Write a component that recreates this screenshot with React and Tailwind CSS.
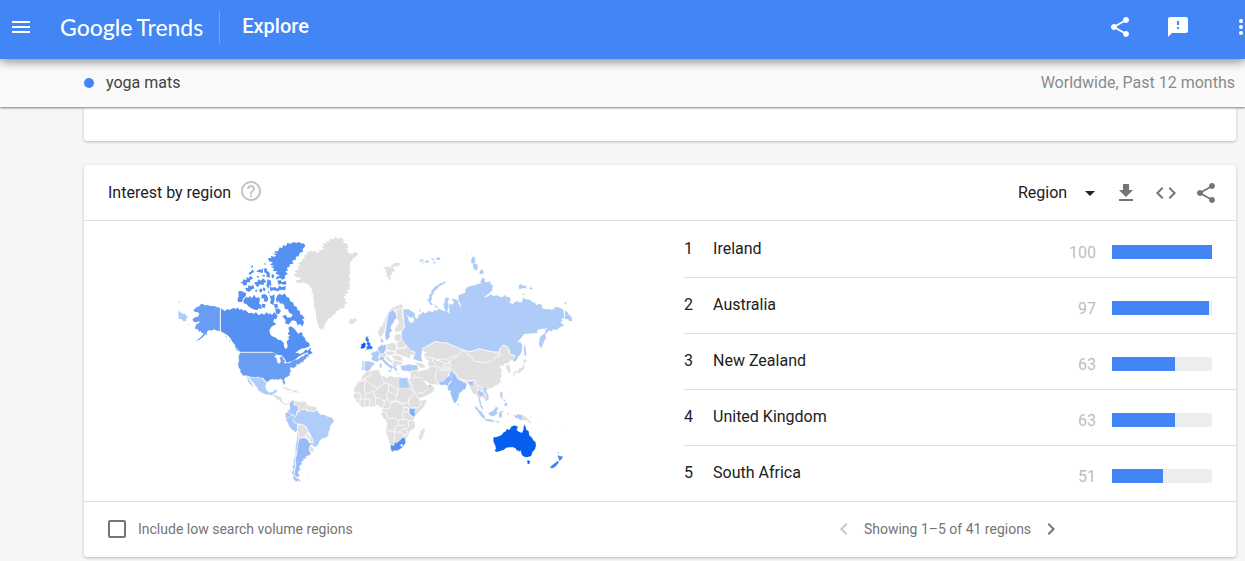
import {
  MdArrowDropDown,
  MdChevronLeft,
  MdChevronRight,
  MdCode,
  MdFeedback,
  MdHelpOutline,
  MdMenu,
  MdShare,
} from "react-icons/md";

const regions = [
  { name: "Ireland", value: 100 },
  { name: "Australia", value: 97 },
  { name: "New Zealand", value: 63 },
  { name: "United Kingdom", value: 63 },
  { name: "South Africa", value: 51 },
];

const GREY = "#e0e0e0";
const LIGHT = "#afccf9";
const SOFT = "#a6c5f9";

// every part of the map has its own origin, three units make one map unit
// outline is the width of the white line round each shape
const mapParts = [
  {
    x: 170,
    y: 230,
    outline: 0,
    shapes: [
      // Alaska
      ["#699df3", "M150 233L141 232 133 228 122 228 112 225 104 226 98 221 92 223 88 229 80 231 74 237 70 241 75 246 84 247 88 252 84 260 76 261 72 264 67 269 72 276 80 277 88 274 88 279 80 282 76 290 75 296 84 298 86 305 92 303 95 309 101 309 96 318 88 325 76 334 88 329 98 322 104 315 110 311 112 304 118 300 124 302 132 298 141 302 150 303Z"],
      // Canada
      ["#5590f3", "M152 234L160 240 165 243 172 237 178 240 184 237 192 233 197 238 203 232 208 239 214 237 220 242 226 239 232 246 236 250 245 248 252 252 258 246 262 252 268 256 274 250 282 254 290 247 296 253 302 250 306 256 312 246 318 252 323 258 318 268 312 267 310 276 319 282 308 288 303 292 298 302 302 315 309 320 316 322 324 329 332 330 341 338 342 350 348 358 353 350 350 334 357 328 355 322 360 316 353 312 358 304 355 293 362 289 370 293 376 300 385 312 390 307 397 308 398 318 403 321 408 333 418 340 419 349 406 354 394 356 384 362 375 370 384 368 388 372 398 369 408 358 412 363 424 352 421 362 428 368 416 375 412 367 400 372 385 380 372 392 350 398 345 388 335 376 320 374 308 368 212 368 206 359 198 354 195 345 186 334 181 324 172 315 160 308 152 303Z"],
      // Arctic islands
      ["#5590f3", "M205 184L214 183 220 186 229 190 227 198 219 206 216 216 205 216 202 208 206 200ZM220 211L228 200 234 204 240 198 246 205 252 194 258 203 268 202 270 212 267 220 274 226 275 237 266 235 262 241 250 238 243 234 236 230 230 223 221 220Z"],
      ["#5590f3", "M321 197L329 191 336 196 344 190 350 200 358 204 360 213 370 218 372 228 380 230 382 239 390 244 390 252 399 257 404 267 396 266 402 276 398 289 388 281 384 287 378 274 369 271 360 275 354 263 364 262 368 254 358 248 353 238 344 236 343 226 336 220 330 221 326 213 320 218 318 208Z"],
      ["#5590f3", "M312 64L324 64 329 52 336 55 340 45 348 48 352 39 363 41 370 36 380 39 388 36 396 41 402 40 406 49 398 57 399 65 389 69 386 79 378 80 377 89 366 92 371 101 360 102 358 111 350 113 354 122 346 124 353 132 344 137 346 145 336 149 330 143 320 149 318 142 329 137 316 130 322 124 308 123 313 116 303 110 314 108 300 104 309 97 297 94 294 84 304 84 303 77 313 81 318 76 308 70 320 71ZM322 152L332 150 336 157 347 152 350 163 340 164 333 161 326 164ZM306 132L313 136 310 146 304 141Z"],
      ["#5590f3", "M299 166L305 173 315 171 322 176 330 165 333 172 347 168 346 181 332 179 322 184 310 180 301 184ZM210 158L218 155 220 148 229 150 230 141 236 144 243 137 249 146 240 150 241 157 230 157 231 164 221 167 219 161ZM235 130L244 124 247 118 253 126 246 129 241 135ZM225 173L234 174 235 166 245 169 249 163 253 175 244 179 238 186 230 183ZM252 157L262 156 266 148 272 152 280 145 290 156 282 158 280 166 270 163 263 172 257 166Z"],
      ["#5590f3", "M259 125L268 118 275 119 280 114 278 130 269 127ZM282 116L289 114 292 123 299 128 300 143 289 140 290 131 283 127ZM293 148L303 152 304 167 297 165 296 177 289 167ZM274 195L283 192 290 196 295 205 291 216 281 214 283 205 275 206ZM298 195L305 198 313 193 314 208 310 226 300 219 303 209ZM312 223L322 221 324 232 315 236ZM316 237L325 235 333 243 326 253 318 251ZM337 259L347 254 351 262 360 265 363 276 355 284 345 279 347 270ZM275 221L287 223 284 235 276 231ZM267 179L274 175 278 184 270 188ZM243 109L249 106 249 112 244 113ZM281 101L287 100 286 106ZM259 139L267 138 265 145ZM275 136L285 135 283 142ZM254 182L262 178 260 187ZM280 172L287 176 284 184 278 180ZM294 182L300 188 294 190Z"],
      // Chukotka past the date line, Pacific islands
      [LIGHT, "M25 242L34 248 38 252 43 250 49 258 55 262 48 266 49 273 40 274 34 267 26 268ZM26 215L30 214 30 219 26 219ZM54 282L59 282 58 286Z"],
      ["#8fb5f6", "M104 311L110 307 112 313 106 316ZM166 317L171 321 169 325ZM177 328L182 337 178 335ZM193 347L205 356 210 366 200 361Z"],
    ],
  },
  {
    x: 230,
    y: 345,
    outline: 2,
    shapes: [
      // USA
      ["#699df3", "M30 22L130 22 140 28 134 36 140 39 143 54 149 55 152 50 149 37 157 33 160 42 166 49 162 54 178 54 190 46 205 42 215 34 220 34 226 27 232 26 238 34 230 37 228 42 221 46 222 50 212 53 206 59 199 58 200 64 190 70 183 67 180 72 184 77 179 84 180 91 172 96 166 98 162 104 166 112 165 119 162 119 158 112 157 105 150 101 146 105 138 103 132 105 128 102 118 106 112 112 106 108 98 98 91 100 85 96 75 98 62 96 50 92 38 92 36 87 30 80 31 74 25 67 24 54 27 47 25 36Z"],
      [LIGHT, "M50 93L62 97 78 98 86 97 96 100 104 110 110 112 107 124 110 136 118 142 128 141 134 134 143 134 138 144 130 146 127 153 121 149 108 149 96 144 84 136 82 128 74 120 70 113 62 106 60 100ZM48 94L56 99 60 107 65 113 67 120 74 128 65 124 60 116 54 111 52 102Z"],
      [GREY, "M128 150L132 146 140 152 152 154 156 164 160 172 168 177 176 173 178 177 170 180 164 180 156 175 149 167 142 165 136 158ZM154 126L166 125 174 130 185 134 182 138 170 135 163 130ZM187 136L196 135 205 141 200 144 188 142ZM174 140L181 140 181 144ZM208 141L214 142 210 145ZM128 202L133 203 130 208Z"],
      [GREY, "M192 170L198 167 205 170 218 170 230 170 229 176 233 181 228 192 218 192 213 199 207 198 206 186 194 180Z"],
      [GREY, "M232 180L244 184 258 186 262 194 250 198 236 198 228 190Z"],
      [SOFT, "M178 176L186 166 193 167 191 173 193 180 204 184 206 196 200 200 198 214 190 210 183 206 174 202 173 197 180 192Z"],
      ["#b0ccf9", "M206 200L218 194 228 193 231 199 238 199 250 200 262 196 268 206 276 209 284 209 291 214 303 217 312 224 311 231 304 239 300 246 300 254 296 261 295 272 288 278 281 279 272 284 268 290 266 297 257 307 244 300 250 292 248 282 240 266 234 258 230 246 218 238 202 236 192 230 188 222 198 214 202 204Z"],
      [SOFT, "M166 204L174 201 184 208 182 214 173 220 166 217Z"],
      ["#a9c7f9", "M166 220L174 219 186 210 196 214 188 224 192 232 202 238 202 256 196 262 184 252 178 246 173 234Z"],
      [GREY, "M203 240L216 238 230 248 231 256 236 260 228 268 224 276 206 278 203 262ZM230 268L238 268 240 276 248 280 249 293 238 292 240 284 226 274ZM238 304L244 305 253 312 250 320 240 320Z"],
      ["#98bbf7", "M208 280L224 278 234 284 238 294 249 295 240 302 237 310 238 319 243 325 239 331 228 334 228 341 220 342 221 348 213 350 217 357 209 363 208 369 213 374 205 379 204 384 209 392 202 397 194 391 194 377 198 362 196 344 201 324 202 300Z"],
      [SOFT, "M202 262L206 280 202 300 199 324 194 344 196 362 192 377 193 391 199 398 210 404 212 411 203 407 198 411 188 399 191 393 185 382 190 375 187 363 192 359 190 347 196 328 197 303 201 282ZM233 395L238 395 234 399Z"],
    ],
  },
  {
    x: 270,
    y: 230,
    outline: 0,
    shapes: [
      // Greenland, Iceland, Svalbard
      [GREY, "M70 134L80 130 74 123 86 118 84 110 90 104 83 99 94 96 98 88 104 84 103 76 110 73 112 63 117 68 121 61 128 65 137 63 140 69 148 66 147 58 155 61 162 57 154 48 163 48 158 39 172 40 168 33 177 34 181 27 190 28 196 21 204 26 215 23 224 32 216 37 234 42 232 49 237 54 226 56 236 60 231 66 240 70 247 73 255 65 266 73 257 79 256 85 248 84 248 92 240 95 240 106 241 114 238 120 241 130 237 138 240 148 238 157 241 165 237 172 240 179 228 182 238 188 224 193 228 197 219 202 229 208 224 213 234 219 222 224 226 231 218 236 208 235 208 241 199 243 196 251 187 257 184 263 175 266 171 274 165 281 163 289 161 300 155 295 151 300 146 291 144 283 141 277 140 268 138 260 138 250 136 240 131 230 133 216 130 206 130 194 125 182 125 174 119 170 116 163 108 162 101 157 92 160 80 158 78 151 90 149 92 143 80 142Z"],
      [GREY, "M233 270L240 272 242 266 250 268 256 264 260 271 253 279 245 283 240 279 235 280 238 275ZM340 112L347 110 350 114 354 107 360 112 366 110 363 104 370 103 375 98 389 99 389 106 381 110 372 108 368 114 375 120 372 126 364 124 367 132 360 138 363 146 358 153 354 142 348 138 352 132 344 126 350 122Z"],
    ],
  },
  {
    x: 350,
    y: 240,
    outline: 2,
    shapes: [
      // Scandinavia
      [GREY, "M84 270L90 266 88 261 97 258 98 250 104 244 105 234 111 228 114 217 122 208 129 202 136 201 139 195 146 197 150 191 158 196 161 203 152 203 146 207 138 210 126 212 116 222 110 240 106 260 104 276 96 288 90 292 85 284Z"],
      [SOFT, "M117 218L128 210 136 216 141 234 134 239 131 248 124 256 122 265 127 272 119 278 120 290 113 299 107 301 105 285 108 266 110 250 113 232Z"],
      [GREY, "M138 212L150 206 156 203 158 232 162 250 161 265 152 274 138 278 134 268 139 258 146 250 145 242 140 235 142 225Z"],
      // western Russia
      [LIGHT, "M160 206L168 208 176 207 184 213 194 219 197 228 190 234 182 233 170 226 176 233 175 241 184 249 191 244 192 237 188 232 195 230 200 236 206 231 203 226 213 222 218 213 222 219 230 218 236 212 248 216 253 210 262 211 268 205 276 210 286 214 282 204 280 193 284 187 283 177 292 171 298 176 294 187 297 200 292 213 299 223 304 212 316 222 326 228 320 216 310 210 318 204 304 198 312 186 302 178 313 176 324 181 326 190 331 198 334 204 332 190 326 168 334 162 346 158 360 300 320 320 300 313 288 308 270 308 258 304 240 314 228 320 232 328 216 326 216 336 214 350 218 366 204 362 189 357 194 344 196 336 184 332 172 320 164 310 156 300 154 284 156 272 164 262 162 240 160 220Z"],
      [LIGHT, "M240 195L237 186 231 181 237 174 237 165 243 160 244 151 251 145 255 139 264 135 270 129 278 128 285 122 287 128 278 134 268 139 262 147 254 153 251 162 245 169 247 177 242 184 249 195ZM250 192L265 202 260 206ZM206 211L213 207 212 216ZM209 59L221 57 219 64 209 65ZM225 63L234 60 239 67 228 70ZM239 51L246 56 255 54 248 63ZM257 55L268 51 272 59 261 61ZM247 70L255 63 258 70ZM217 66L224 65 222 71ZM347 41L354 43 350 46Z"],
      // British Isles
      ["#2f75f0", "M47 292L56 287 53 295 58 298 56 304 62 312 61 317 69 320 66 328 55 328 46 332 51 325 47 320 54 318 49 311 52 306 46 300Z"],
      ["#0558ee", "M32 311L38 312 40 307 47 310 47 317 43 325 33 326 31 321 35 318Z"],
      // western Europe
      [SOFT, "M91 297L97 294 98 300 102 304 97 308 93 305ZM87 318L93 317 95 312 100 316 109 312 108 330 103 336 105 342 89 341 86 332 82 330Z"],
      [LIGHT, "M60 338L68 338 69 334 76 336 80 331 86 335 90 341 85 351 89 361 80 366 64 360 67 348ZM44 363L60 364 74 369 73 374 65 380 60 390 51 394 43 391ZM36 363L42 364 42 391 35 390 37 378Z"],
      [LIGHT, "M88 350L95 348 105 351 102 357 109 364 116 371 126 377 133 383 127 385 127 393 121 384 112 378 104 372 98 362 88 360ZM112 390L124 390 123 398ZM89 371L96 370 95 384 88 382Z"],
      [GREY, "M90 343L104 340 113 344 106 350 90 349ZM111 314L124 308 138 310 139 325 135 333 120 332 110 327ZM142 308L152 298 160 304 167 315 162 324 140 322ZM136 283L152 282 156 298 140 305 132 296ZM136 334L143 325 162 326 170 319 184 332 195 337 192 344 180 346 182 353 172 356 170 349 160 351 153 345 139 343ZM108 334L120 334 134 335 135 342 122 346 108 344ZM106 353L114 349 122 359 129 361 127 370 114 364ZM124 347L138 345 150 348 158 357 157 364 141 361 132 358ZM132 360L142 363 158 366 154 375 138 374 132 382 128 372Z"],
    ],
  },
  {
    x: 450,
    y: 250,
    outline: 0,
    shapes: [
      // eastern Russia
      [LIGHT, "M-2 284L-2 160 26 174 34 174 33 165 25 150 26 135 45 131 46 120 50 113 60 108 75 106 82 101 92 101 92 93 98 82 105 88 103 94 110 97 122 94 121 103 129 104 126 122 112 134 101 143 112 140 122 132 128 138 140 136 152 141 160 140 164 134 168 140 178 141 182 148 179 158 190 162 194 156 202 153 207 157 216 157 219 143 228 148 242 150 246 156 256 158 257 165 270 162 276 165 276 174 286 178 300 177 304 180 314 176 314 170 330 173 341 180 343 204 333 207 339 211 331 217 340 222 340 228 329 232 325 236 318 241 311 238 304 245 296 241 293 247 286 253 288 265 282 274 278 286 271 295 267 282 269 264 276 255 286 249 286 240 296 231 286 236 276 236 262 240 262 249 244 250 222 252 214 263 200 278 208 275 216 282 217 300 211 314 204 320 200 331 190 335 188 328 196 318 180 312 178 300 170 288 158 286 150 296 148 306 130 306 110 302 88 296 66 304 50 304 38 300 22 292 10 284Z"],
      [LIGHT, "M345 182L352 185 356 194 363 198 366 206 366 214 358 213 352 207 345 207ZM342 158L349 156 350 161 344 161ZM65 24L70 19 75 24 76 36 69 42 63 37ZM68 44L76 40 82 44 84 54 78 62 71 55ZM90 63L97 58 102 67 96 73 88 72ZM206 106L214 102 219 108 226 106 231 115 218 115 208 118ZM236 114L244 112 250 118 241 118ZM217 131L223 130 222 136ZM222 283L226 291 229 313 224 320 222 304Z"],
      // Japan and Korea
      [GREY, "M221 332L226 327 232 334 226 335 222 341 219 337ZM220 343L224 350 220 360 213 364 208 371 202 366 193 371 191 365 204 363 208 355 216 354ZM169 345L176 344 180 351 182 366 175 370 173 360 168 353ZM189 371L196 373 191 380Z"],
    ],
  },
  {
    x: 345,
    y: 350,
    outline: 2,
    shapes: [
      // Turkey and the Middle East
      [LIGHT, "M166 49L171 46 180 46 192 42 204 45 216 45 220 58 210 62 199 62 193 66 188 62 177 64 168 58ZM145 46L154 44 156 48 151 51 158 58 154 65 147 57ZM153 69L163 69 160 73Z"],
      [GREY, "M208 36L218 38 232 40 242 49 236 54 226 54 220 48ZM197 65L216 60 224 74 230 82 216 82 196 84ZM196 84L216 82 232 85 238 95 248 107 264 109 270 116 262 128 246 136 228 144 218 143 211 128 202 112 192 92Z"],
      [LIGHT, "M248 107L258 102 260 108 255 113Z"],
      // Africa
      [GREY, "M62 65L74 62 86 62 96 59 105 60 103 68 107 74 120 80 127 84 134 77 150 82 162 80 176 84 188 82 192 92 198 101 203 116 208 124 214 138 222 148 226 152 244 149 244 157 235 173 225 184 214 194 207 206 206 213 210 221 210 232 202 240 195 244 191 254 187 261 182 267 182 279 171 292 162 300 156 303 147 302 142 306 138 300 136 287 131 274 128 260 122 245 124 232 127 221 121 210 113 202 108 193 112 184 112 174 104 173 99 165 90 168 80 172 72 168 60 172 54 172 42 162 35 154 30 148 25 137 28 128 26 113 33 104 37 95 47 90 51 79 58 73ZM238 230L240 242 235 254 232 266 224 271 220 261 225 251 224 243 232 239Z"],
      [LIGHT, "M162 83L176 84 188 83 190 87 186 90 194 107 195 114 162 114Z"],
      ["#80adf7", "M192 174L202 177 211 174 209 188 212 192 205 201 192 190Z"],
      ["#5590f3", "M136 284L147 287 149 276 155 279 163 272 174 262 180 263 182 279 177 286 171 293 162 300 154 302 148 301 142 306 138 300Z"],
      ["#ffffff", "M166 286L170 282 174 286 170 290Z"],
    ],
  },
  {
    x: 430,
    y: 350,
    outline: 1,
    shapes: [
      // Asia
      [GREY, "M-24 -4L-12 -10 0 -16 18 -26 30 -22 48 -22 60 -16 82 -8 110 4 126 4 148 -4 170 2 190 6 208 6 210 -4 218 -14 230 -12 238 0 240 12 256 18 250 28 240 33 232 42 222 40 224 45 211 48 209 54 218 58 212 67 216 78 211 87 212 95 204 104 192 109 188 114 178 114 170 120 176 138 176 148 166 154 158 140 148 144 150 155 143 142 138 133 130 132 120 112 114 100 98 98 84 88 70 72 60 62 52 80 44 94 28 104 13 103 0 103 -8 95 -19 91 -27 82 -37 70 -40 61 -28 63 -20 59 -5 58 -4 48 -7 38 -2 32 -12 26 -18 13 -10 8 -22 3Z"],
      ["#9bbff9", "M64 74L70 71 76 75 82 87 98 95 111 102 107 110 108 116 99 120 94 125 87 131 86 141 82 151 76 160 71 156 66 143 61 130 62 120 56 123 52 116 56 104 64 96ZM114 99L120 95 132 92 128 98 130 109 122 105Z"],
      ["#a0c2f9", "M28 97L42 94 50 82 58 78 60 66 68 64 72 70 64 77 66 90 56 100 52 109 46 104 32 106Z"],
      [LIGHT, "M82 158L89 165 84 169ZM143 125L150 121 154 125 160 125 162 134 156 139 150 140 151 151 155 160 151 164 146 153 148 141ZM156 113L162 111 170 117 166 124 174 134 176 145 170 153 165 154 171 146 170 136 161 124ZM149 162L156 167 161 179 156 177 149 168ZM132 169L141 171 147 180 154 184 159 192 165 198 165 208 157 203 150 194 143 184 137 177ZM163 206L173 207 183 208 192 213 191 217 178 214 167 212ZM175 187L182 186 188 182 194 176 198 169 205 176 199 184 204 189 197 195 192 198 184 199 178 194ZM207 190L212 183 223 183 214 189 219 195 214 197 218 205 211 201 207 205ZM210 129L215 124 218 133 217 141 220 146 212 143ZM219 147L226 149 224 157ZM222 162L231 155 232 167 224 168ZM206 164L213 155 209 162ZM247 193L257 197 264 192 278 196 278 211 269 209 262 204 256 204 253 198ZM192 214L202 214 210 213 204 218ZM231 187L236 192 232 197Z"],
      [GREY, "M279 196L289 200 294 208 300 212 306 219 298 218 291 211 284 212 279 210ZM298 204L304 199 305 204ZM316 214L321 219 318 219ZM212 96L216 93 214 102ZM357 238L363 242 360 242ZM400 234L404 232 404 235Z"],
      // Australia and New Zealand
      ["#055eef", "M190 262L199 261 210 257 217 253 221 246 226 245 231 236 237 240 241 236 243 230 253 226 264 230 260 240 268 246 276 248 280 240 282 223 287 230 289 239 296 243 298 256 306 263 310 271 317 277 318 288 315 298 307 307 304 318 291 322 284 321 276 316 273 307 271 301 267 307 265 301 260 303 258 296 249 292 241 292 229 293 221 300 209 304 199 306 194 302 198 295 194 283 190 274ZM291 331L300 332 299 341 293 342Z"],
      ["#3f82f3", "M386 314L389 319 399 319 396 326 388 334 386 325 383 321ZM383 332L387 337 379 347 374 352 367 355 360 354 363 348 374 340ZM382 306L387 309 385 312Z"],
    ],
  },
];

// country borders drawn over the filled land
const borders = [
  { x: 345, y: 350, d: "M74 62L80 74 60 84 46 92 28 112M60 84L60 94 44 94M60 88L80 104 98 114 118 100 112 90 112 78 106 72M118 100L132 102 160 118 162 114M98 114L92 122 78 126 66 132 58 126 60 94M132 102L130 124 124 132 128 146 120 152 110 150 104 142 92 146 84 126M158 118L156 136 152 146 156 154 174 160 188 158 194 146 208 126M156 136L130 124M128 146L132 156 156 152M120 152L116 168 112 174 124 178 136 174 136 160 152 154 174 164 176 176 172 198 176 210 166 208 158 212 154 204 138 204 128 206M190 114L206 124M192 146L190 162 200 172 216 174 230 164 222 152M174 172L192 174 192 190 204 202M176 184L192 188M176 204L190 212 208 210M190 212L192 230 184 238 190 252M124 242L148 244 150 230 160 226 160 212M148 244L148 276M148 246L166 246 176 254 174 264M164 244L176 234 184 238M176 254L188 252M160 226L170 228 180 224M30 148L46 144 44 160M46 144L58 148 60 172M58 148L72 146 76 172M78 148L84 168M90 146L92 166M28 130L44 128 48 142M60 132L60 146M112 174L104 166M112 186L126 188 126 204M204 110L192 92M218 130L236 128 250 116M222 66L216 60M246 56L228 62M202 70L216 82" },
  { x: 430, y: 350, d: "M-24 -4L-12 -10 0 -16 18 -26 30 -22 48 -22 60 -16 82 -8 110 4 126 4 148 -4 170 2 190 6 208 6 210 -4 218 -14 230 -12 238 0 240 12 256 18M-12 22L6 22 18 30 34 34 44 42 58 40 54 30 64 20 84 16 92 4 106 2M6 22L8 36 24 50 36 56M-4 52L12 48 24 58 36 62 44 56 60 60M17 64L17 92 27 104M36 62L54 60M44 42L40 50 56 52 60 60M54 30L36 26 18 30M106 2L112 12 126 22 134 34 164 38 184 34 196 24 210 18 208 6M84 16L58 36 64 58 78 72 88 86 110 92 124 92 136 92 142 106 158 112M142 106L144 124M160 112L158 122 166 134M158 124L150 122M232 42L224 42M88 88L104 96 112 94M190 6L208 16" },
  { x: 170, y: 230, d: "M151 230L151 306M210 367L308 367" },
];

const WorldMap = () => (
  <svg viewBox="170 230 410 260" className="h-[260px] w-[410px]" role="img" aria-label="Interest by region map">
    {mapParts.map((part) => (
      <g key={`${part.x}-${part.y}`} transform={`translate(${part.x} ${part.y}) scale(0.33333)`}>
        {part.shapes.map(([color, d]) => (
          <path
            key={d}
            d={d}
            fill={color}
            stroke="#fff"
            strokeOpacity="0.5"
            strokeWidth={part.outline}
            strokeLinejoin="round"
          />
        ))}
      </g>
    ))}
    {borders.map((b) => (
      <path
        key={b.d}
        d={b.d}
        transform={`translate(${b.x} ${b.y}) scale(0.33333)`}
        fill="none"
        stroke="#fff"
        strokeOpacity="0.75"
        strokeWidth="3"
      />
    ))}
  </svg>
);

const AppsIcon = () => (
  <svg viewBox="0 0 24 24" className="size-6" fill="#fff">
    {[6, 12, 18].map((cy) =>
      [6, 12, 18].map((cx) => <circle key={`${cx}-${cy}`} cx={cx} cy={cy} r="2" />)
    )}
  </svg>
);

const DownloadIcon = () => (
  <svg viewBox="0 0 24 24" className="size-6" fill="currentColor">
    <path d="M19 9h-4V3H9v6H5l7 7 7-7zM5 18v2h14v-2H5z" />
  </svg>
);

const Header = () => (
  <header className="relative z-20 flex h-[59px] items-center overflow-hidden bg-[#4285f4] pb-1.5 text-white shadow-[0_2px_10px_rgba(0,0,0,0.5)]">
    <button aria-label="Main menu" className="ml-[9px] shrink-0">
      <MdMenu className="size-6" />
    </button>
    <a href="#" className="ml-[27px] flex shrink-0 gap-1 font-['Lato',sans-serif] text-[23px] leading-8">
      <span className="font-medium">Google</span>
      <span>Trends</span>
    </a>
    <div className="ml-4 h-8 w-px bg-white/25" />
    <h1 className="-mt-0.5 ml-[22px] text-xl font-medium leading-7">Explore</h1>
    <div className="-mr-3.5 ml-auto flex shrink-0 items-center">
      <button aria-label="Share">
        <MdShare className="size-6" />
      </button>
      <button aria-label="Send feedback" className="ml-[34px]">
        <MdFeedback className="size-6" />
      </button>
      <button aria-label="Google apps" className="ml-[45px]">
        <AppsIcon />
      </button>
    </div>
  </header>
);

const RegionRow = ({ rank, region }) => (
  <tr className="h-14 border-b border-[#e0e0e0] last:border-b-0">
    <td className="w-[29px]">{rank}</td>
    <td>{region.name}</td>
    <td className="w-14 pr-4 pt-2 text-right text-[#bdbdbd]">{region.value}</td>
    <td className="w-[124px] pr-6 pt-1.5">
      <div className="h-3.5 bg-[#eeeeee]">
        <div className="h-full bg-[#4285f4]" style={{ width: `${region.value}%` }} />
      </div>
    </td>
  </tr>
);

export default function App() {
  return (
    <div className="min-h-screen overflow-hidden bg-[#f6f6f6] font-['Roboto',sans-serif] text-base text-[#212121]">
      <Header />

      <div className="relative z-10 flex h-12 items-center bg-[#fafafa] pl-[84px] pr-2.5 shadow-[0_1px_2px_rgba(0,0,0,0.5)]">
        <span className="size-2.5 rounded-full bg-[#4285f4]" />
        <span className="ml-3 text-[#424242]">yoga mats</span>
        <span className="ml-auto text-[#8a8a8a]">Worldwide, Past 12 months</span>
      </div>

      <main className="ml-[84px] mr-[9px]">
        <div className="mb-6 h-[34px] rounded-b-sm bg-white shadow-[0_1px_3px_rgba(0,0,0,0.25)]" />

        <section className="rounded-sm bg-white shadow-[0_1px_3px_rgba(0,0,0,0.25)]">
          <div className="flex h-14 items-center border-b border-[#e0e0e0] px-6">
            <h2>Interest by region</h2>
            <button aria-label="Help" className="-mt-1 ml-2">
              <MdHelpOutline className="size-6 text-[#c4c4c4]" />
            </button>
            <div className="ml-auto flex items-center text-[#757575]">
              <div className="relative flex items-center text-[#212121]">
                <select aria-label="Resolution" className="w-[84px] appearance-none bg-transparent">
                  <option>Region</option>
                </select>
                <MdArrowDropDown className="pointer-events-none absolute right-0 size-6" />
              </div>
              <button aria-label="Download CSV" className="ml-3">
                <DownloadIcon />
              </button>
              <button aria-label="Embed" className="ml-4">
                <MdCode className="size-6" />
              </button>
              <button aria-label="Share chart" className="-mr-1.5 ml-4">
                <MdShare className="size-6" />
              </button>
            </div>
          </div>

          <div className="flex">
            <div className="flex w-[52%] items-center justify-center pb-0.5 pr-[18px]">
              <WorldMap />
            </div>
            <table className="ml-px flex-1 border-collapse">
              <tbody>
                {regions.map((region, i) => (
                  <RegionRow key={region.name} rank={i + 1} region={region} />
                ))}
              </tbody>
            </table>
          </div>

          <div className="flex h-14 items-center border-t border-[#e0e0e0] pb-0.5 text-sm text-[#757575]">
            <div className="w-[52%] pl-6">
              <label className="flex w-fit items-center gap-3">
                <input type="checkbox" className="size-[18px] appearance-none rounded-xs border-2 border-[#757575]" />
                Include low search volume regions
              </label>
            </div>
            <div className="flex flex-1 items-center justify-center pr-6">
              <button aria-label="Previous" disabled className="text-[#c8c8c8]">
                <MdChevronLeft className="size-6" />
              </button>
              <span className="mx-2">Showing 1–5 of 41 regions</span>
              <button aria-label="Next">
                <MdChevronRight className="size-6" />
              </button>
            </div>
          </div>
        </section>
      </main>
    </div>
  );
}
